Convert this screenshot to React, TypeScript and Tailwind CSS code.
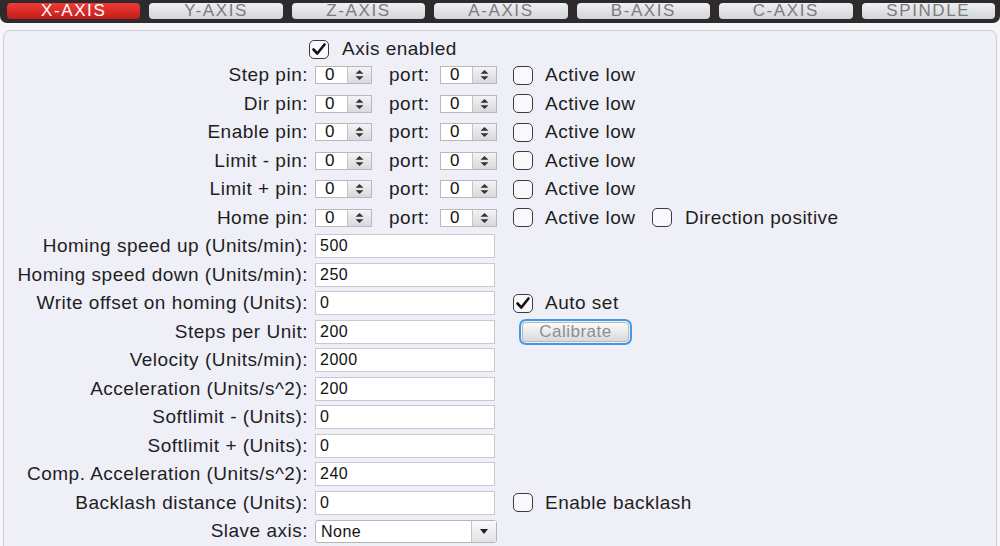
import React from "react";

const FONT = { fontFamily: '"Liberation Sans", Arial, sans-serif' };

const tabs = ["X-AXIS", "Y-AXIS", "Z-AXIS", "A-AXIS", "B-AXIS", "C-AXIS", "SPINDLE"];

const Check = ({ checked = false }: { checked?: boolean }) => (
  <div className="w-[20px] h-[19px] shrink-0 rounded-[5px] border-[1.5px] border-[#3c3c3c] bg-[#f9f9fb] flex items-center justify-center">
    {checked && (
      <svg width="16" height="15" viewBox="0 0 16 15">
        <path d="M2.5 7.5 L6.3 11.5 L13.5 2.5" fill="none" stroke="#111" strokeWidth="2.6" strokeLinecap="round" strokeLinejoin="round" />
      </svg>
    )}
  </div>
);

const Spin = ({ value }: { value: string }) => (
  <div className="flex h-[18px] w-[57px] shrink-0 border border-[#b9b9bd] bg-white">
    <div className="w-[31px] pl-[9px] text-[17px] leading-[16px] text-[#111]">{value}</div>
    <div className="flex-1 border-l border-[#c4c4c8] bg-gradient-to-b from-[#f4f4f6] to-[#d9d9dd] flex items-center justify-center">
      <svg width="11" height="12" viewBox="0 0 11 12">
        <path d="M1.5 4.8 L5.5 1 L9.5 4.8 Z" fill="#333" />
        <path d="M1.5 7.2 L5.5 11 L9.5 7.2 Z" fill="#333" />
      </svg>
    </div>
  </div>
);

const Label = ({ children }: { children: React.ReactNode }) => (
  <div className="w-[304px] shrink-0 text-right whitespace-nowrap">{children}</div>
);

const Field = ({ value }: { value: string }) => (
  <div className="ml-[7px] w-[180px] h-[24px] shrink-0 border border-[#c9c9cd] bg-white pl-[4px] text-[16px] leading-[22px] text-[#111]">
    {value}
  </div>
);

const pinRows = [
  { label: "Step pin:" },
  { label: "Dir pin:" },
  { label: "Enable pin:" },
  { label: "Limit - pin:" },
  { label: "Limit + pin:" },
  { label: "Home pin:", direction: true },
];

const fieldRows: { label: string; value: string; extra?: "auto" | "calibrate" | "backlash" }[] = [
  { label: "Homing speed up (Units/min):", value: "500" },
  { label: "Homing speed down (Units/min):", value: "250" },
  { label: "Write offset on homing (Units):", value: "0", extra: "auto" },
  { label: "Steps per Unit:", value: "200", extra: "calibrate" },
  { label: "Velocity (Units/min):", value: "2000" },
  { label: "Acceleration (Units/s^2):", value: "200" },
  { label: "Softlimit - (Units):", value: "0" },
  { label: "Softlimit + (Units):", value: "0" },
  { label: "Comp. Acceleration (Units/s^2):", value: "240" },
  { label: "Backlash distance (Units):", value: "0", extra: "backlash" },
];

export default function App() {
  return (
    <div className="w-[1000px] h-[546px] overflow-hidden bg-[#f6f6f9] text-[#1e1e1e]" style={FONT}>
      {/* axis tab strip */}
      <div className="h-[23px] bg-[#2f2b2c] rounded-b-[7px] flex gap-[9px] pl-[7px] pr-[5px] pt-[3px]">
        {tabs.map((t, i) => (
          <div
            key={t}
            className={
              i === 0
                ? "flex-1 h-[16px] rounded-[4px] flex items-center justify-center bg-gradient-to-b from-[#ee3b36] to-[#c41c18] text-white text-[17px] tracking-[1.6px]"
                : "flex-1 h-[16px] rounded-[4px] flex items-center justify-center bg-gradient-to-b from-[#eef0f3] to-[#d3d5da] text-[#7b7b7e] text-[17px] tracking-[1.6px]"
            }
          >
            {t}
          </div>
        ))}
      </div>

      {/* settings panel */}
      <div className="mt-[7px] mx-[3px] h-[540px] border border-[#cdcdd2] rounded-t-[7px] bg-[#efeff7] pt-[6px] text-[19px] tracking-[0.5px]">
        <div className="h-[24px] flex items-center">
          <div className="w-[304px] shrink-0" />
          <div className="ml-[1px]">
            <Check checked />
          </div>
          <div className="ml-[13px]">Axis enabled</div>
        </div>

        {pinRows.map((r) => (
          <div key={r.label} className="h-[28.5px] flex items-center">
            <Label>{r.label}</Label>
            <div className="ml-[7px]">
              <Spin value="0" />
            </div>
            <div className="ml-[17px] w-[51px]">port:</div>
            <Spin value="0" />
            <div className="ml-[16px]">
              <Check />
            </div>
            <div className="ml-[12px] w-[107px] whitespace-nowrap">Active low</div>
            {r.direction && (
              <>
                <Check />
                <div className="ml-[13px] whitespace-nowrap">Direction positive</div>
              </>
            )}
          </div>
        ))}

        {fieldRows.map((r) => (
          <div key={r.label} className="h-[28.5px] flex items-center">
            <Label>{r.label}</Label>
            <Field value={r.value} />
            {r.extra === "auto" && (
              <>
                <div className="ml-[18px]">
                  <Check checked />
                </div>
                <div className="ml-[12px]">Auto set</div>
              </>
            )}
            {r.extra === "backlash" && (
              <>
                <div className="ml-[18px]">
                  <Check />
                </div>
                <div className="ml-[12px]">Enable backlash</div>
              </>
            )}
            {r.extra === "calibrate" && (
              <div className="ml-[24px] w-[113px] h-[26px] rounded-[7px] border-[2.5px] border-[#3f98ea] p-[1px]">
                <div className="h-full rounded-[4px] border border-[#b9b9be] bg-gradient-to-b from-[#fbfbfc] to-[#dadadd] flex items-center justify-center text-[17px] tracking-[0.5px] text-[#8e8e92]">
                  Calibrate
                </div>
              </div>
            )}
          </div>
        ))}

        <div className="h-[28.5px] flex items-center">
          <Label>Slave axis:</Label>
          <div className="ml-[7px] w-[182px] h-[23px] flex rounded-[3px] border border-[#b5b5ba] bg-white text-[16px] text-[#111]">
            <div className="flex-1 pl-[5px] leading-[21px]">None</div>
            <div className="w-[25px] border-l border-[#c4c4c8] bg-gradient-to-b from-[#fafafb] to-[#e2e2e5] flex items-center justify-center">
              <svg width="8" height="5" viewBox="0 0 8 5">
                <path d="M0 0 L8 0 L4 5 Z" fill="#222" />
              </svg>
            </div>
          </div>
        </div>
      </div>
    </div>
  );
}
